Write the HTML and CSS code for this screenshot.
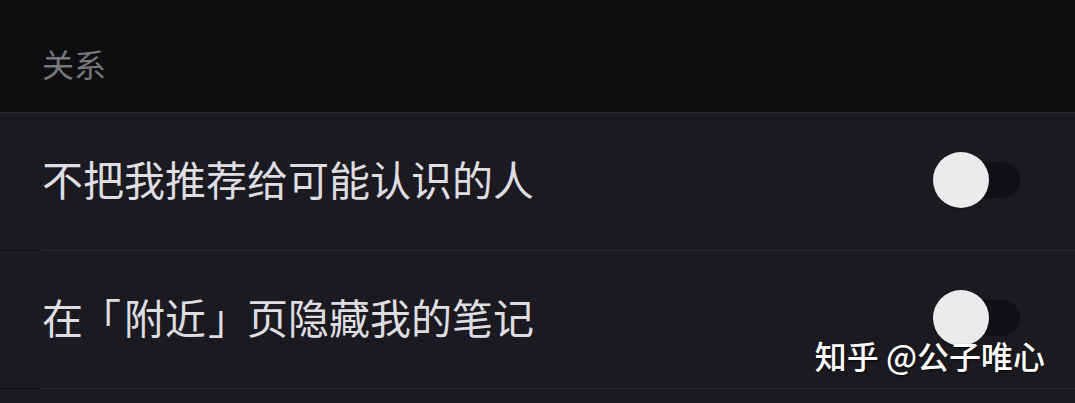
FILE: index.html
```html
<!DOCTYPE html>
<html>
<head>
  <meta charset="utf-8">
  <title>隐私设置</title>
  <link rel="stylesheet" href="styles.css">
</head>
<body>

  <div class="section-title">关系</div>

  <div class="list">
    <div class="row">
      <span class="row-label">不把我推荐给可能认识的人</span>
      <div class="switch"><span class="track"></span><span class="knob"></span></div>
    </div>
    <div class="row">
      <span class="row-label">在<span class="bracket open">「</span>附近<span class="bracket close">」</span>页隐藏我的笔记</span>
      <div class="switch"><span class="track"></span><span class="knob"></span></div>
    </div>
    <div class="row row-empty"></div>
  </div>

  <div class="watermark">知乎 @公子唯心</div>

</body>
</html>
```

FILE: styles.css
```css
html, body {
  margin: 0;
  height: 100%;
  overflow: hidden;
}
body {
  font-family: "Noto Sans CJK SC", "Noto Sans", sans-serif;
  background: #0e0e11;
  position: relative;
}
.section-title {
  height: 112px;
  box-sizing: border-box;
  padding: 47px 0 0 42px;
  font-size: 32px;
  line-height: 1;
  color: #76767b;
}
.list {
  background: #1b1a20;
  border-top: 1px solid #2a2a30;
  height: 100%;
}
/* separator: dark under the inset, light after it */
.row {
  display: flex;
  align-items: center;
  justify-content: space-between;
  height: 138px;
  box-sizing: border-box;
  padding: 0 55px 4px 42px;
  background: linear-gradient(to right, #0e0e11 41px, #2b2b31 41px) bottom / 100% 1px no-repeat, #1b1a20;
}
.row-empty {
  background: none;
}
.row-label {
  font-size: 41px;
  line-height: 1;
  margin-bottom: 4px;
  color: #dedde2;
}
/* corner brackets nudged towards the middle of their box */
.bracket {
  display: inline-block;
  width: 1em;
  white-space: nowrap;
}
.bracket.open {
  text-indent: -3px;
}
.bracket.close {
  text-indent: 2px;
}
.switch {
  position: relative;
  width: 87px;
  height: 56px;
}
.switch .track {
  position: absolute;
  right: 0;
  top: 10px;
  width: 82px;
  height: 36px;
  border-radius: 18px;
  background: #111115;
}
.switch .knob {
  position: absolute;
  left: 0;
  top: 0;
  width: 56px;
  height: 56px;
  border-radius: 50%;
  background: #ebebed;
  box-shadow: 0 1px 2px rgba(0,0,0,0.4);
}
.watermark {
  position: absolute;
  right: 30px;
  top: 333px;
  font-size: 32px;
  line-height: 44px;
  font-weight: 500;
  color: #fff;
  text-shadow: 1px 1px 2px rgba(0,0,0,0.8);
}
```
